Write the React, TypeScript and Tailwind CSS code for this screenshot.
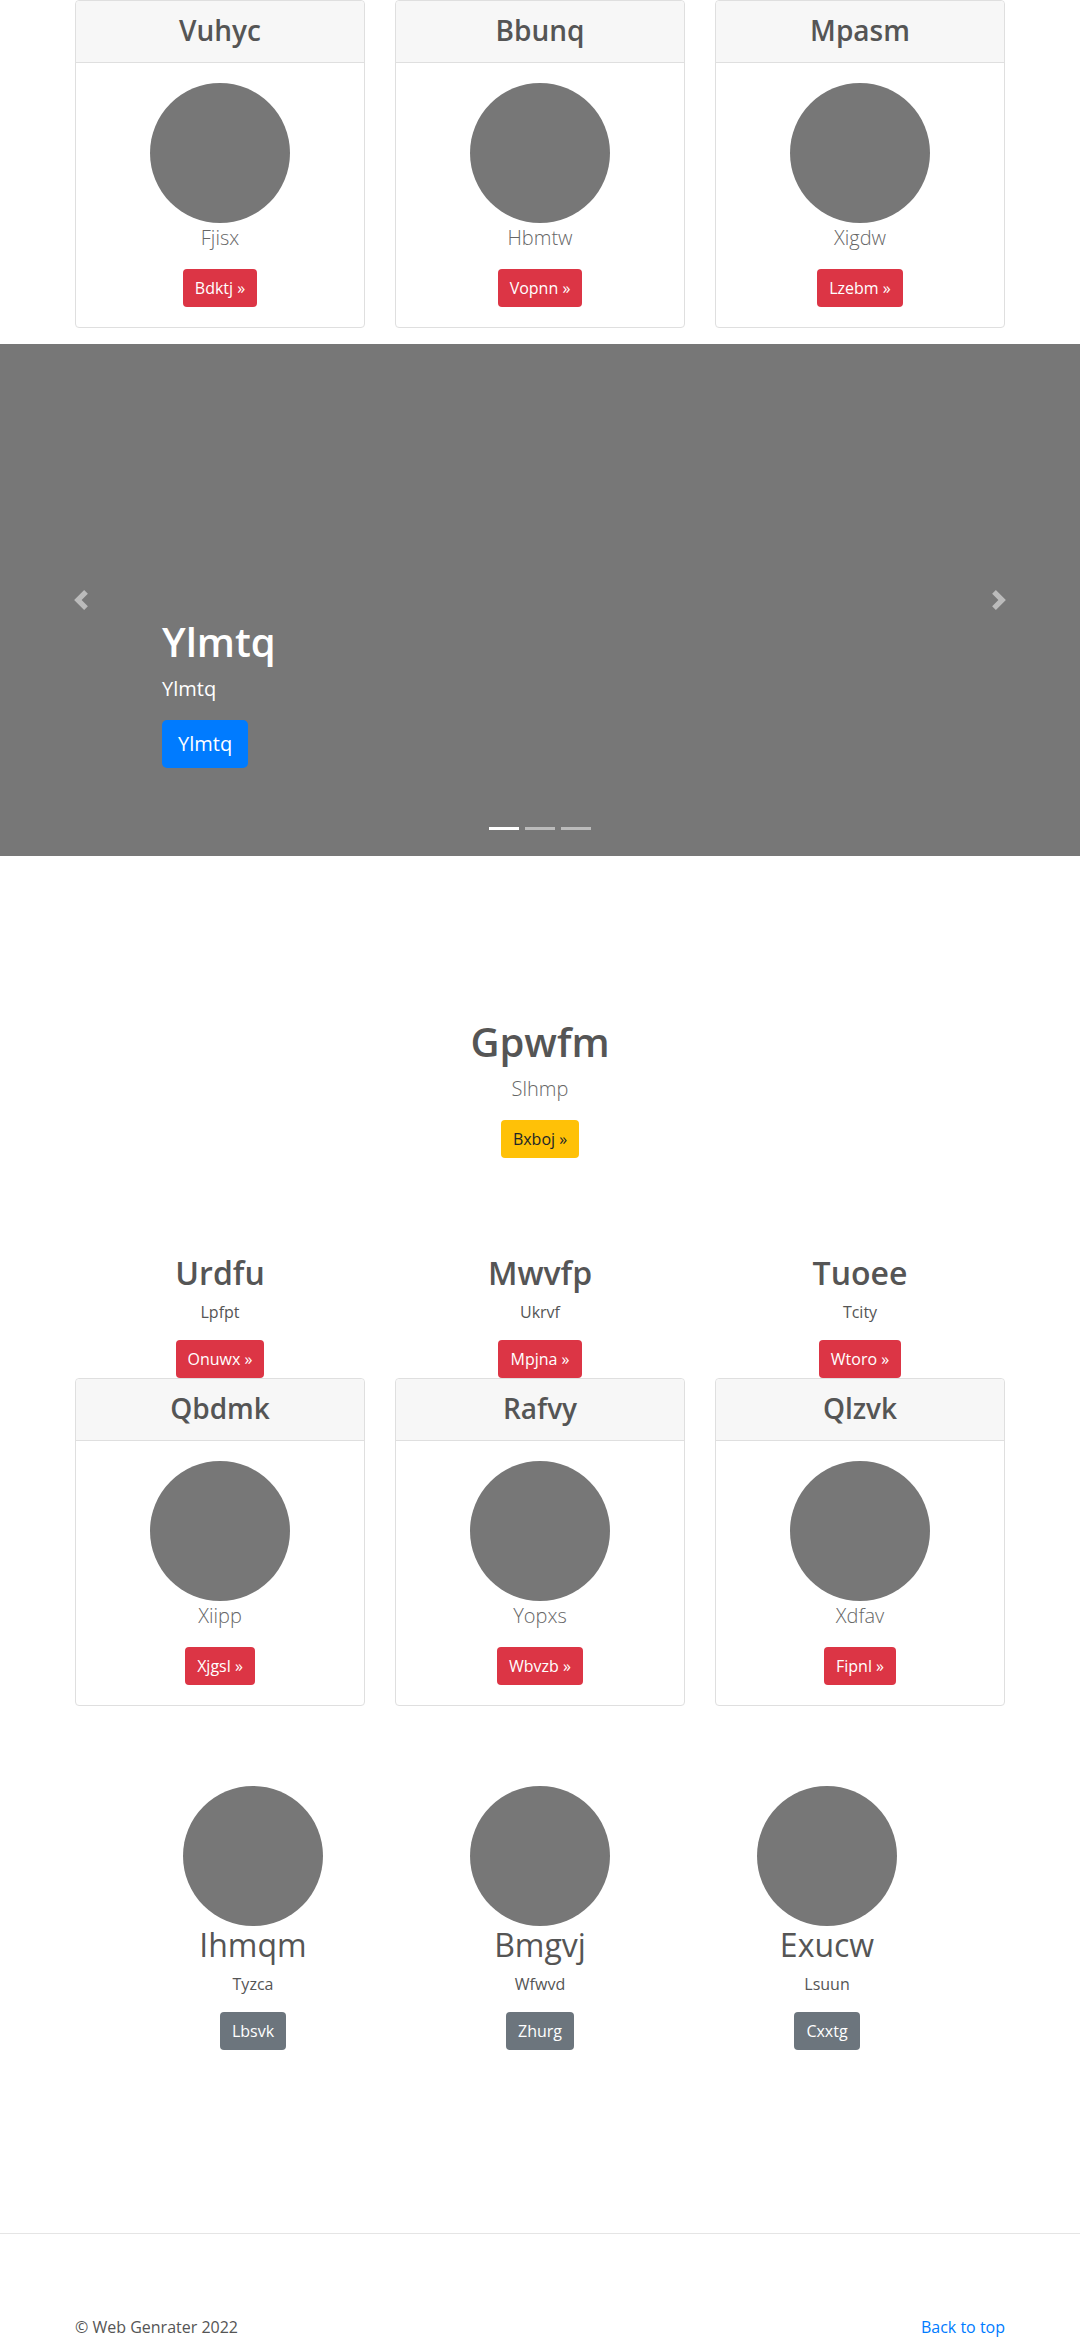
import React from 'react';

interface CardItem {
  title: string;
  lead: string;
  button: string;
}

interface ColumnItem {
  title: string;
  text: string;
  button: string;
}

const topCards: CardItem[] = [
  { title: 'Vuhyc', lead: 'Fjisx', button: 'Bdktj' },
  { title: 'Bbunq', lead: 'Hbmtw', button: 'Vopnn' },
  { title: 'Mpasm', lead: 'Xigdw', button: 'Lzebm' },
];

const bottomCards: CardItem[] = [
  { title: 'Qbdmk', lead: 'Xiipp', button: 'Xjgsl' },
  { title: 'Rafvy', lead: 'Yopxs', button: 'Wbvzb' },
  { title: 'Qlzvk', lead: 'Xdfav', button: 'Fipnl' },
];

const columns: ColumnItem[] = [
  { title: 'Urdfu', text: 'Lpfpt', button: 'Onuwx' },
  { title: 'Mwvfp', text: 'Ukrvf', button: 'Mpjna' },
  { title: 'Tuoee', text: 'Tcity', button: 'Wtoro' },
];

const marketing: ColumnItem[] = [
  { title: 'Ihmqm', text: 'Tyzca', button: 'Lbsvk' },
  { title: 'Bmgvj', text: 'Wfwvd', button: 'Zhurg' },
  { title: 'Exucw', text: 'Lsuun', button: 'Cxxtg' },
];

const Card: React.FC<{ item: CardItem }> = ({ item }) => (
  <div className="border border-[#dfdfdf] rounded-[4px] bg-white text-center">
    <div className="h-[62px] pt-3 border-b border-[#dfdfdf] bg-[#f7f7f7] rounded-t-[4px]">
      <h3 className="text-[28px] leading-[34px] font-semibold text-[#555]">{item.title}</h3>
    </div>
    <div className="p-5 flex flex-col items-center">
      <div className="w-[140px] h-[140px] rounded-full bg-[#777]" />
      <p className="text-[20px] leading-[30px] font-light text-[#666] mb-4">{item.lead}</p>
      <a className="h-[38px] px-3 rounded-[4px] bg-[#dc3545] text-white text-[16px] leading-[38px]">
        {item.button} »
      </a>
    </div>
  </div>
);

const Chevron: React.FC<{ dir: 'prev' | 'next' }> = ({ dir }) => (
  <svg width="20" height="20" viewBox="0 0 8 8" fill="#fff" className="opacity-50">
    {dir === 'prev' ? (
      <path d="M5.25 0l-4 4 4 4 1.5-1.5L4.25 4l2.5-2.5L5.25 0z" />
    ) : (
      <path d="M2.75 0l-1.5 1.5L3.75 4l-2.5 2.5L2.75 8l4-4-4-4z" />
    )}
  </svg>
);

const Carousel: React.FC = () => (
  <div className="relative h-[512px] bg-[#777]">
    <div className="absolute left-0 top-0 bottom-0 w-[15%] flex items-center justify-center">
      <Chevron dir="prev" />
    </div>
    <div className="absolute right-0 top-0 bottom-0 w-[15%] flex items-center justify-center">
      <Chevron dir="next" />
    </div>
    <div className="absolute left-[15%] right-[15%] bottom-[52px] py-5 text-left text-white">
      <h1 className="text-[40px] leading-[48px] font-semibold mb-2">Ylmtq</h1>
      <p className="text-[20px] leading-[30px] mb-4">Ylmtq</p>
      <p className="flex mb-4">
        <a className="h-[48px] px-4 rounded-[5px] bg-[#007bff] text-[20px] leading-[48px] text-white">
          Ylmtq
        </a>
      </p>
    </div>
    <div className="absolute left-0 right-0 bottom-[16px] flex justify-center">
      {[0, 1, 2].map((i) => (
        <span
          key={i}
          className={`mx-[3px] w-[30px] h-[3px] my-[10px] bg-white ${i === 0 ? 'opacity-100' : 'opacity-50'}`}
        />
      ))}
    </div>
  </div>
);

export default function App() {
  return (
    <div className="min-h-screen bg-white text-[#555] font-['Open_Sans','Noto_Sans',sans-serif]">
      <div className="w-[960px] mx-auto px-[15px] grid grid-cols-3 gap-[30px] mb-4">
        {topCards.map((c) => (
          <Card key={c.title} item={c} />
        ))}
      </div>

      <Carousel />

      <section className="pt-[162px] text-center flex flex-col items-center">
        <h1 className="text-[40px] leading-[48px] font-semibold mb-2">Gpwfm</h1>
        <p className="text-[20px] leading-[30px] font-light text-[#666] mb-4">Slhmp</p>
        <a className="h-[38px] px-3 rounded-[4px] bg-[#ffc107] text-[#212529] text-[16px] leading-[38px]">
          Bxboj »
        </a>
      </section>

      <div className="w-[960px] mx-auto px-[15px] mt-[96px] grid grid-cols-3 gap-[30px] text-center">
        {columns.map((c) => (
          <div key={c.title} className="flex flex-col items-center">
            <h2 className="text-[32px] leading-[38px] font-semibold mb-2">{c.title}</h2>
            <p className="text-[16px] leading-[24px] mb-4">{c.text}</p>
            <a className="h-[38px] px-3 rounded-[4px] bg-[#dc3545] text-white text-[16px] leading-[38px]">
              {c.button} »
            </a>
          </div>
        ))}
      </div>

      <div className="w-[960px] mx-auto px-[15px] grid grid-cols-3 gap-[30px]">
        {bottomCards.map((c) => (
          <Card key={c.title} item={c} />
        ))}
      </div>

      <div className="w-[861px] mx-auto mt-[80px] grid grid-cols-3 text-center">
        {marketing.map((c) => (
          <div key={c.title} className="flex flex-col items-center">
            <div className="w-[140px] h-[140px] rounded-full bg-[#777]" />
            <h2 className="text-[32px] leading-[38px] font-normal mb-2">{c.title}</h2>
            <p className="text-[16px] leading-[24px] mb-4">{c.text}</p>
            <a className="h-[38px] px-3 rounded-[4px] bg-[#6c757d] text-white text-[16px] leading-[38px]">
              {c.button}
            </a>
          </div>
        ))}
      </div>

      <hr className="mt-[183px] border-0 border-t border-[#e5e5e5]" />

      <footer className="w-[960px] mx-auto px-[15px] pt-[81px] pb-12 flex justify-between text-[16px] leading-[24px]">
        <p>© Web Genrater 2022</p>
        <a className="text-[#007bff]">Back to top</a>
      </footer>
    </div>
  );
}
